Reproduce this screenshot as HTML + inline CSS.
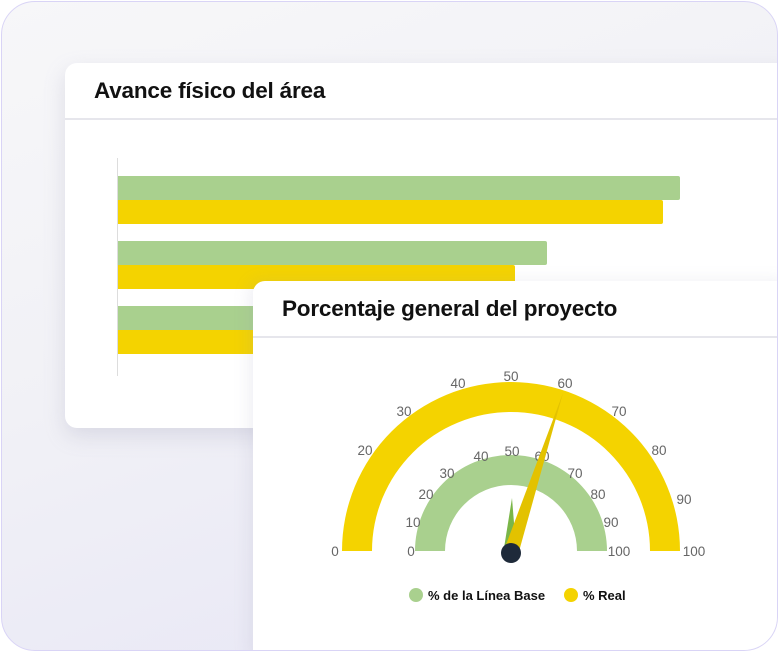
<!DOCTYPE html>
<html><head><meta charset="utf-8"><style>
*{margin:0;padding:0;box-sizing:border-box}
body{width:779px;height:652px;overflow:hidden;background:#fff;font-family:"Liberation Sans",sans-serif;position:relative}
.bg{position:absolute;left:1px;top:1px;width:777px;height:650px;border:1.5px solid #d9d4f6;border-radius:34px;background:linear-gradient(160deg,#f7f7f9 0%,#f1f1f6 45%,#e6e5f5 100%);overflow:hidden}
.card{position:absolute;background:#fff;border-radius:12px}
.c1{width:730px;height:365px;box-shadow:0 8px 20px rgba(150,150,180,.25)}
.c2{width:540px;height:380px;box-shadow:-4px 0 16px rgba(150,150,180,.15)}
.hd{height:57px;border-bottom:2px solid #e6e6ec;font-weight:bold;font-size:22.5px;color:#111;letter-spacing:-0.2px;padding-left:29px;line-height:56px}
.bar{position:absolute;left:53px;height:24px;border-radius:0 2px 2px 0}
.g{background:#a9d08e}.y{background:#f4d300}
</style></head><body>
<div class="bg">
<div class="card c1" style="left:63px;top:61px">
<div class="hd">Avance físico del área</div>
<div style="position:absolute;left:52px;top:95px;width:1px;height:218px;background:#ddd"></div>
<div class="bar g" style="top:113px;width:562px"></div>
<div class="bar y" style="top:137px;width:545px"></div>
<div class="bar g" style="top:178px;width:429px"></div>
<div class="bar y" style="top:202px;width:397px"></div>
<div class="bar g" style="top:243px;width:300px"></div>
<div class="bar y" style="top:267px;width:300px"></div>
</div>
<div class="card c2" style="left:251px;top:279px">
<div class="hd">Porcentaje general del proyecto</div>
</div>
</div>
<svg style="position:absolute;left:0;top:0" width="779" height="652" font-family="Liberation Sans" font-size="13.5" fill="#666" text-anchor="middle">
<path d="M342,551 A169,169 0 0 1 680,551 L650,551 A139,139 0 0 0 372,551 Z" fill="#f4d300"/>
<path d="M415,551 A96,96 0 0 1 607,551 L577,551 A66,66 0 0 0 445,551 Z" fill="#a9d08e"/>
<g>
<text x="335" y="556">0</text>
<text x="365" y="455">20</text>
<text x="404" y="416">30</text>
<text x="458" y="388">40</text>
<text x="511" y="381">50</text>
<text x="565" y="388">60</text>
<text x="619" y="416">70</text>
<text x="659" y="455">80</text>
<text x="684" y="504">90</text>
<text x="694" y="556">100</text>
<text x="411" y="556">0</text>
<text x="413" y="527">10</text>
<text x="426" y="499">20</text>
<text x="447" y="478">30</text>
<text x="481" y="461">40</text>
<text x="512" y="456">50</text>
<text x="542" y="461">60</text>
<text x="575" y="478">70</text>
<text x="598" y="499">80</text>
<text x="611" y="527">90</text>
<text x="619" y="556">100</text>
</g>
<path d="M512,498 L516,548 L504,548 Z" fill="#7ab648"/>
<path d="M563,393 L518,555 L504,550 Z" fill="#e3c200"/>
<circle cx="511" cy="553" r="10" fill="#1e2a3a"/>
<circle cx="416" cy="595" r="7" fill="#a9d08e"/>
<circle cx="571" cy="595" r="7" fill="#f4d300"/>
<text x="428" y="600" text-anchor="start" font-weight="bold" fill="#111" font-size="13">% de la Línea Base</text>
<text x="583" y="600" text-anchor="start" font-weight="bold" fill="#111" font-size="13">% Real</text>
</svg>
</body></html>
